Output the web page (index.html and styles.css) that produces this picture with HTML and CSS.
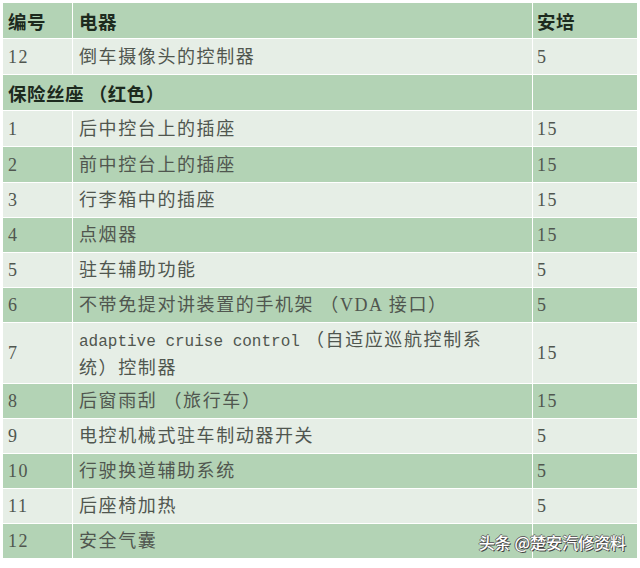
FILE: index.html
```html
<!DOCTYPE html>
<html lang="zh">
<head>
<meta charset="utf-8">
<title>保险丝座</title>
<link rel="stylesheet" href="styles.css">
</head>
<body>
<div class="wrap">
<table class="fuse">
  <colgroup>
    <col class="c-no">
    <col class="c-name">
    <col class="c-amp">
  </colgroup>
  <tr class="dark head tall"><td class="no">编号</td><td class="name">电器</td><td class="amp">安培</td></tr>
  <tr class="light tall"><td class="no">12</td><td class="name">倒车摄像头的控制器</td><td class="amp">5</td></tr>
  <tr class="dark head tall"><td class="no" colspan="2">保险丝座 （红色）</td><td class="amp"></td></tr>
  <tr class="light tall"><td class="no">1</td><td class="name">后中控台上的插座</td><td class="amp">15</td></tr>
  <tr class="dark tall"><td class="no">2</td><td class="name">前中控台上的插座</td><td class="amp">15</td></tr>
  <tr class="light"><td class="no">3</td><td class="name">行李箱中的插座</td><td class="amp">15</td></tr>
  <tr class="dark"><td class="no">4</td><td class="name">点烟器</td><td class="amp">15</td></tr>
  <tr class="light"><td class="no">5</td><td class="name">驻车辅助功能</td><td class="amp">5</td></tr>
  <tr class="dark"><td class="no">6</td><td class="name">不带免提对讲装置的手机架 （VDA 接口）</td><td class="amp">5</td></tr>
  <tr class="light double"><td class="no">7</td><td class="name two"><span class="mono">adaptive cruise control</span> （自适应巡航控制系<br>统）控制器</td><td class="amp">15</td></tr>
  <tr class="dark"><td class="no">8</td><td class="name">后窗雨刮 （旅行车）</td><td class="amp">15</td></tr>
  <tr class="light"><td class="no">9</td><td class="name">电控机械式驻车制动器开关</td><td class="amp">5</td></tr>
  <tr class="dark"><td class="no">10</td><td class="name">行驶换道辅助系统</td><td class="amp">5</td></tr>
  <tr class="light"><td class="no">11</td><td class="name">后座椅加热</td><td class="amp">5</td></tr>
  <tr class="dark"><td class="no">12</td><td class="name">安全气囊</td><td class="amp"></td></tr>
</table>
<div class="watermark">头条 @楚安汽修资料</div>
</div>
</body>
</html>
```
FILE: styles.css
```css
html, body {
  margin: 0;
  padding: 0;
  background: #ffffff;
}
body {
  padding: 2px;
  font-family: "Liberation Serif", "Noto Sans CJK SC", serif;
  font-size: 18px;
  color: #50564f;
}
.wrap {
  position: relative;
  width: 636px;
}
.fuse {
  border-collapse: separate;
  border-spacing: 1px;
  table-layout: fixed;
  width: 636px;
}
.c-no { width: 69px; }
.c-name { width: 459px; }
.c-amp { width: 104px; }
.fuse td {
  height: 34px;
  padding: 0;
  vertical-align: middle;
  letter-spacing: 1.6px;
  white-space: nowrap;
  line-height: 24px;
}
.fuse tr.tall td { height: 35px; }
.fuse tr.double td { height: 59px; }
.fuse td.no { padding-left: 5px; }
.fuse td.name { padding-left: 6px; }
.fuse td.amp { padding-left: 4px; }
.fuse td.two { line-height: 26px; padding-top: 1px; }
.dark td { background: #b3d3b5; }
.light td { background: #e6eee6; }
.head td {
  font-family: "Noto Sans CJK SC", sans-serif;
  font-size: 18.5px;
  font-weight: 700;
  color: #1d2a1e;
  letter-spacing: 0.5px;
}
.mono {
  font-family: "Liberation Mono", monospace;
  font-size: 16px;
  letter-spacing: 0;
}
.watermark {
  position: absolute;
  right: 12px;
  bottom: 5px;
  font-family: "Noto Sans CJK SC", sans-serif;
  font-size: 16px;
  font-weight: 500;
  color: #ffffff;
  letter-spacing: 0;
  text-shadow: 1px 1px 0 #444, -1px 0 0 #666, 0 -1px 0 #666;
}
```
